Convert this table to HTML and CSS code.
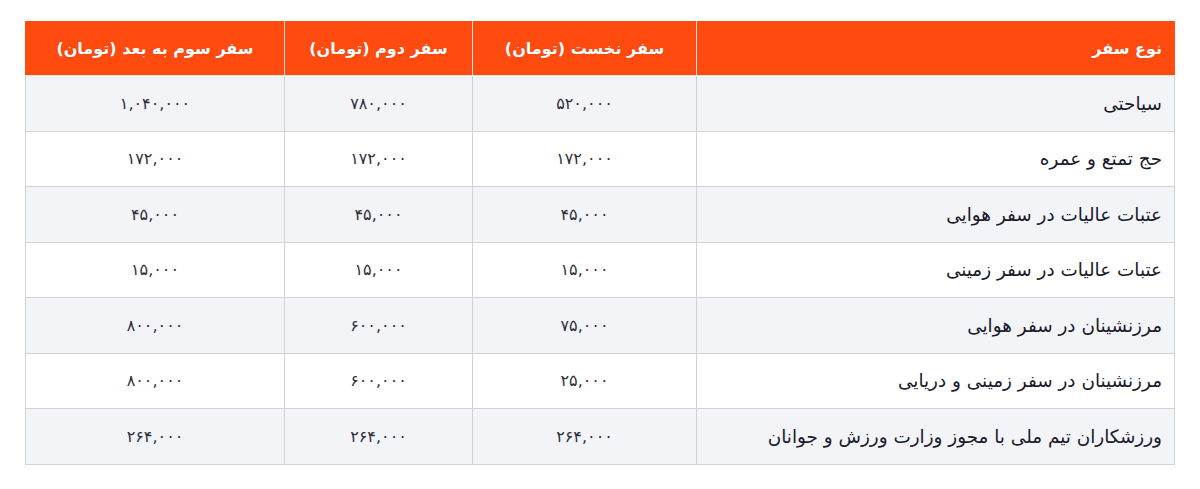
FILE: index.html
```html
<!DOCTYPE html>
<html lang="fa" dir="rtl">
<head>
<meta charset="utf-8">
<link rel="stylesheet" href="styles.css">
</head>
<body>
<div class="wrap">
<table class="fare">
  <colgroup>
    <col class="c-type"><col class="c-1"><col class="c-2"><col class="c-3">
  </colgroup>
  <thead>
    <tr>
      <th class="first">نوع سفر</th>
      <th>سفر نخست (تومان)</th>
      <th>سفر دوم (تومان)</th>
      <th>سفر سوم به بعد (تومان)</th>
    </tr>
  </thead>
  <tbody>
    <tr><td class="first">سیاحتی</td><td>۵۲۰,۰۰۰</td><td>۷۸۰,۰۰۰</td><td>۱,۰۴۰,۰۰۰</td></tr>
    <tr><td class="first">حج تمتع و عمره</td><td>۱۷۲,۰۰۰</td><td>۱۷۲,۰۰۰</td><td>۱۷۲,۰۰۰</td></tr>
    <tr><td class="first">عتبات عالیات در سفر هوایی</td><td>۴۵,۰۰۰</td><td>۴۵,۰۰۰</td><td>۴۵,۰۰۰</td></tr>
    <tr><td class="first">عتبات عالیات در سفر زمینی</td><td>۱۵,۰۰۰</td><td>۱۵,۰۰۰</td><td>۱۵,۰۰۰</td></tr>
    <tr><td class="first">مرزنشینان در سفر هوایی</td><td>۷۵,۰۰۰</td><td>۶۰۰,۰۰۰</td><td>۸۰۰,۰۰۰</td></tr>
    <tr><td class="first">مرزنشینان در سفر زمینی و دریایی</td><td>۲۵,۰۰۰</td><td>۶۰۰,۰۰۰</td><td>۸۰۰,۰۰۰</td></tr>
    <tr><td class="first">ورزشکاران تیم ملی با مجوز وزارت ورزش و جوانان</td><td>۲۶۴,۰۰۰</td><td>۲۶۴,۰۰۰</td><td>۲۶۴,۰۰۰</td></tr>
  </tbody>
</table>
</div>
</body>
</html>
```

FILE: styles.css
```css
html, body {
  margin: 0;
  padding: 0;
  background: #ffffff;
}
body {
  font-family: "DejaVu Sans", "Noto Sans", sans-serif;
  color: #1d1d2b;
}
.wrap {
  padding: 21px 25px 0 0;
  display: flex;
  justify-content: flex-start;
}
.fare {
  width: 1149px;
  border-collapse: collapse;
  table-layout: fixed;
  border: 1px solid #d2d2d6;
}
.c-type { width: 478px; }
.c-1 { width: 224px; }
.c-2 { width: 188px; }
.c-3 { width: 259px; }
.fare thead tr {
  height: 54px;
  background: #ff4a10;
}
.fare th {
  color: #ffffff;
  font-weight: bold;
  font-size: 16px;
  text-align: center;
  border: 1px solid #e8e4e0;
  border-top-color: #ff4a10;
  padding: 0 12px;
  text-shadow: 0 0 1px rgba(120, 40, 0, 0.35);
}
.fare th:first-child {
  border-right-color: #ff4a10;
}
.fare th:last-child {
  border-left-color: #ff4a10;
}
.fare th.first {
  text-align: right;
}
.fare tbody tr {
  height: 55.5px;
}
.fare tbody tr:nth-child(odd) {
  background: #f3f4f8;
}
.fare tbody tr:nth-child(even) {
  background: #ffffff;
}
.fare td {
  border: 1px solid #d2d2d6;
  text-align: center;
  font-size: 16px;
  color: #2e2e3a;
  padding: 0 12px;
}
.fare td.first {
  text-align: right;
  font-size: 18.4px;
  color: #1a1a2a;
}
```
